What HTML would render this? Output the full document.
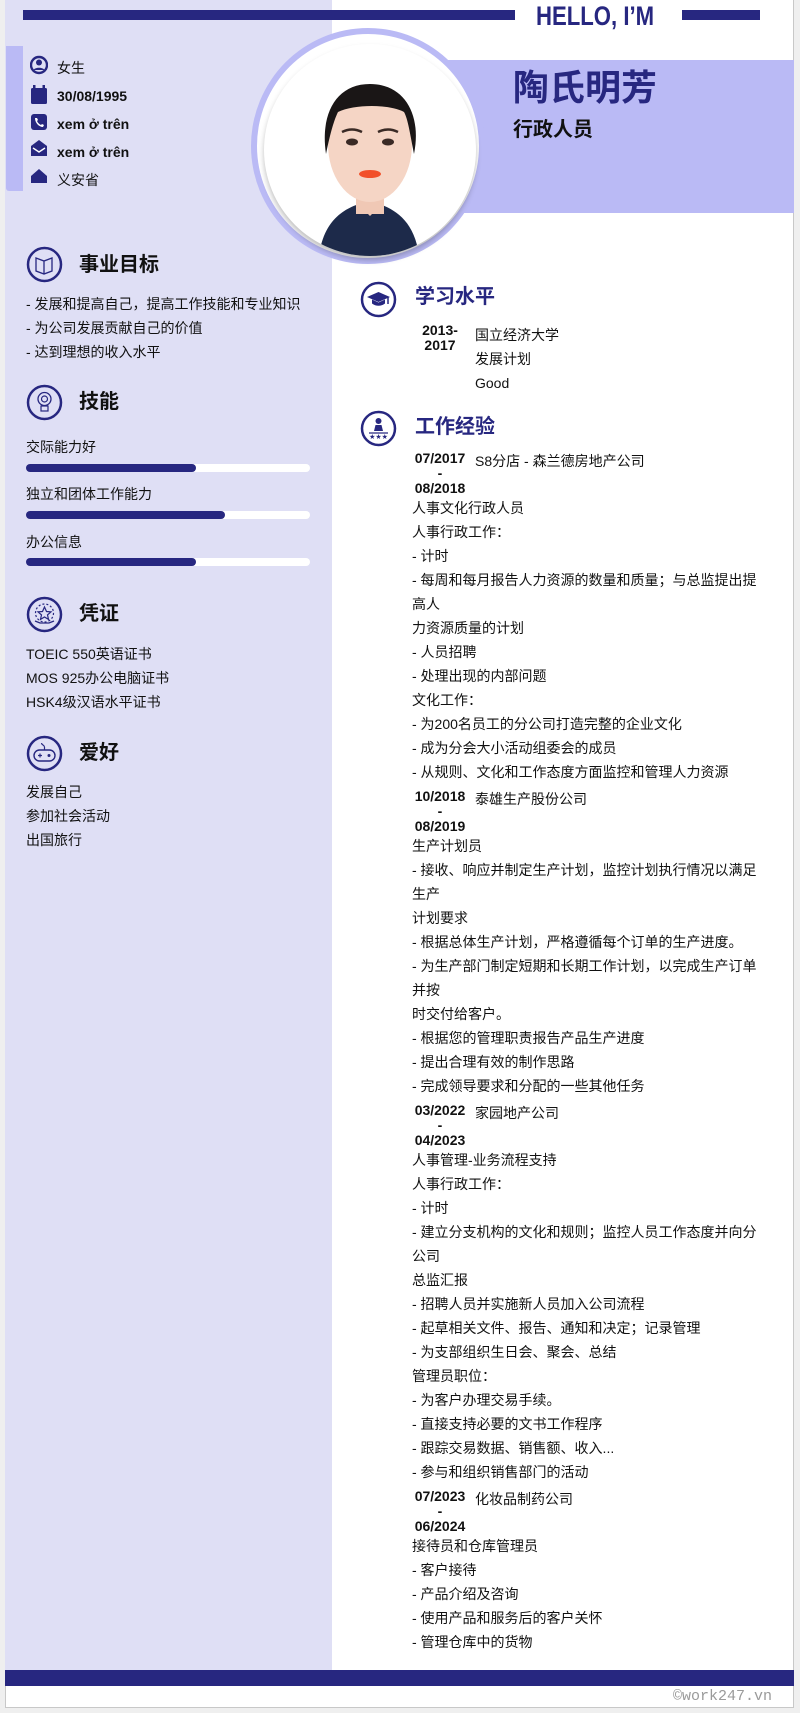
<!DOCTYPE html>
<html><head><meta charset="utf-8">
<style>
*{margin:0;padding:0;box-sizing:border-box}
html,body{width:800px;height:1713px;background:#efefef;overflow:hidden}
body{font-family:"Liberation Sans","Noto Sans CJK SC",sans-serif;color:#111;position:relative}
.page{position:absolute;left:5px;top:0;width:789px;height:1708px;background:#fff;border:1px solid #c8c8c8;border-top:none}
.abs{position:absolute}
.left{position:absolute;left:5px;top:0;width:327px;height:1670px;background:#dfdff5}
.navy{background:#272780}
.ci{position:absolute;left:57px;font-size:14px;line-height:20px;white-space:nowrap}
.h2{position:absolute;font-size:20px;font-weight:bold;line-height:26px;white-space:nowrap}
.txt{position:absolute;left:26px;font-size:14px;line-height:24px;white-space:nowrap}
.bar{position:absolute;left:26px;width:284px;height:8px;background:#fff;border-radius:4px}
.bar i{display:block;height:8px;background:#272780;border-radius:4px}
.job{position:absolute;left:412px;width:360px;font-size:14px;line-height:24px;white-space:nowrap}
.row{display:flex;height:50px}
.dt{width:56px;text-align:center;font-weight:bold;line-height:15px;padding-top:5px}
.co{padding-left:7px;padding-top:3px}
</style></head><body>
<div class="page"></div>
<div class="left"></div>
<div class="abs navy" style="left:23px;top:10px;width:492px;height:10px"></div>
<div class="abs navy" style="left:682px;top:10px;width:78px;height:10px"></div>
<div class="abs" style="left:536px;top:0px;font-size:27px;font-weight:bold;color:#272780;line-height:32px;transform:scaleX(0.82);transform-origin:left;white-space:nowrap">HELLO, I’M</div>

<div class="abs" style="left:6px;top:46px;width:17px;height:145px;background:#babaf5;border-radius:0 0 0 3px"></div>
<svg class="abs" style="left:30px;top:55px" width="18" height="140" viewBox="0 0 18 140">
<g fill="#272780">
<circle cx="9" cy="10" r="8" fill="none" stroke="#272780" stroke-width="2.4"/><circle cx="9" cy="7.5" r="3"/><path d="M3.5 15c1.5-3 9.5-3 11 0z"/>
<rect x="1" y="33" width="16" height="16" rx="1.5"/><rect x="3" y="30" width="2.5" height="5"/><rect x="12.5" y="30" width="2.5" height="5"/>
<rect x="1" y="59" width="16" height="16" rx="3"/>
<path d="M1 91l8-6 8 6v10H1z"/>
<path d="M1 121l8-7 8 7v7H1z"/>
</g>
<path d="M5 63c0 5 4 9 8 9l1-2-2-1-1 1c-2-1-3-2-4-4l1-1-1-2z" fill="#fff"/>
<path d="M3 93l6 4 6-4" fill="none" stroke="#fff" stroke-width="1.4"/>
</svg>
<div class="ci" style="top:58px">女生</div>
<div class="ci" style="top:86px;font-weight:bold">30/08/1995</div>
<div class="ci" style="top:114px;font-weight:bold">xem ở trên</div>
<div class="ci" style="top:142px;font-weight:bold">xem ở trên</div>
<div class="ci" style="top:170px">义安省</div>

<div class="abs" style="left:430px;top:60px;width:364px;height:153px;background:#babaf5"></div>
<div class="abs" style="left:513px;top:66px;font-size:36px;font-weight:bold;color:#272780;line-height:44px">陶氏明芳</div>
<div class="abs" style="left:513px;top:117px;font-size:20px;font-weight:bold;line-height:26px">行政人员</div>

<div class="abs" style="left:251px;top:28px;width:234px;height:236px;border-radius:50%;border:6px solid #babaf5;background:#fff"></div>
<div class="abs" style="left:264px;top:44px;width:212px;height:212px;border-radius:50%;overflow:hidden;background:#fff;box-shadow:0 4px 6px rgba(0,0,0,.25)">
<svg width="212" height="212" viewBox="0 0 212 212">
<path d="M55 212c5-40 30-50 50-55 20 5 45 15 50 55z" fill="#1d2a4a"/>
<rect x="92" y="140" width="28" height="30" fill="#f0c8b5"/>
<path d="M92 158l14 14 14-14" fill="#f0c8b5"/>
<ellipse cx="106" cy="100" rx="42" ry="58" fill="#f5d5c5"/>
<path d="M62 110c-6-40 10-70 44-70s52 30 44 70c-4-20-6-35-10-42-14-8-50-8-66 0-4 8-8 22-12 42z" fill="#1a1616"/>
<ellipse cx="88" cy="98" rx="6" ry="3.5" fill="#3a2a25"/><ellipse cx="124" cy="98" rx="6" ry="3.5" fill="#3a2a25"/>
<path d="M78 88q10-5 20 0M114 88q10-5 20 0" stroke="#3a2a25" stroke-width="2.5" fill="none"/>
<ellipse cx="106" cy="130" rx="11" ry="4" fill="#f2502a"/>
</svg></div>

<svg class="abs" style="left:26px;top:246px" width="37" height="37" viewBox="0 0 37 37"><circle cx="18.5" cy="18.5" r="16.5" fill="none" stroke="#272780" stroke-width="2.5"/><path d="M10 12l8 3 8-3v13l-8 3-8-3zM18 15v13" fill="none" stroke="#272780" stroke-width="1.3"/></svg>
<div class="h2" style="left:79px;top:252px">事业目标</div>
<div class="txt" style="top:292px">- 发展和提高自己，提高工作技能和专业知识</div>
<div class="txt" style="top:316px">- 为公司发展贡献自己的价值</div>
<div class="txt" style="top:340px">- 达到理想的收入水平</div>

<svg class="abs" style="left:26px;top:384px" width="37" height="37" viewBox="0 0 37 37"><circle cx="18.5" cy="18.5" r="16.5" fill="none" stroke="#272780" stroke-width="2.5"/><circle cx="18.5" cy="15" r="6.5" fill="none" stroke="#272780" stroke-width="1.3"/><circle cx="18.5" cy="15" r="3" fill="none" stroke="#272780" stroke-width="1.2"/><rect x="15" y="22" width="7" height="5" fill="none" stroke="#272780" stroke-width="1.2"/></svg>
<div class="h2" style="left:79px;top:389px">技能</div>
<div class="txt" style="top:435px">交际能力好</div>
<div class="bar" style="top:464px"><i style="width:170px"></i></div>
<div class="txt" style="top:482px">独立和团体工作能力</div>
<div class="bar" style="top:511px"><i style="width:199px"></i></div>
<div class="txt" style="top:530px">办公信息</div>
<div class="bar" style="top:558px"><i style="width:170px"></i></div>

<svg class="abs" style="left:26px;top:596px" width="37" height="37" viewBox="0 0 37 37"><circle cx="18.5" cy="18.5" r="16.5" fill="none" stroke="#272780" stroke-width="2.5"/><circle cx="18.5" cy="17" r="9" fill="none" stroke="#272780" stroke-width="1.2" stroke-dasharray="2 2"/><path d="M18.5 11l2 4.5 4.5.4-3.5 3 1 4.5-4-2.4-4 2.4 1-4.5-3.5-3 4.5-.4z" fill="none" stroke="#272780" stroke-width="1.2"/><path d="M9 25l5 2h9l5-2" fill="none" stroke="#272780" stroke-width="1.3"/></svg>
<div class="h2" style="left:79px;top:601px">凭证</div>
<div class="txt" style="top:642px">TOEIC 550英语证书</div>
<div class="txt" style="top:666px">MOS 925办公电脑证书</div>
<div class="txt" style="top:690px">HSK4级汉语水平证书</div>

<svg class="abs" style="left:26px;top:735px" width="37" height="37" viewBox="0 0 37 37"><circle cx="18.5" cy="18.5" r="16.5" fill="none" stroke="#272780" stroke-width="2.5"/><rect x="8" y="15" width="21" height="11" rx="5.5" fill="none" stroke="#272780" stroke-width="1.4"/><path d="M18.5 15v-3c0-2-3-2-3-4" fill="none" stroke="#272780" stroke-width="1.2"/><path d="M12 20.5h4M14 18.5v4" stroke="#272780" stroke-width="1.2"/><circle cx="23" cy="20.5" r="1.5" fill="#272780"/></svg>
<div class="h2" style="left:79px;top:740px">爱好</div>
<div class="txt" style="top:780px">发展自己</div>
<div class="txt" style="top:804px">参加社会活动</div>
<div class="txt" style="top:828px">出国旅行</div>

<svg class="abs" style="left:360px;top:281px" width="37" height="37" viewBox="0 0 37 37"><circle cx="18.5" cy="18.5" r="16.5" fill="none" stroke="#272780" stroke-width="2.5"/><path d="M7 16l11.5-5 11.5 5-11.5 5z" fill="#272780"/><path d="M12 18.5v4c4 3 9 3 13 0v-4l-6.5 3z" fill="#272780"/><path d="M28 16v7" stroke="#272780" stroke-width="1.5"/></svg>
<div class="h2" style="left:415px;top:284px;color:#272780">学习水平</div>
<div class="abs" style="left:412px;top:323px;width:56px;text-align:center;font-weight:bold;font-size:14px;line-height:15px">2013-<br>2017</div>
<div class="abs" style="left:475px;top:323px;font-size:14px;line-height:24px">国立经济大学<br>发展计划<br>Good</div>

<svg class="abs" style="left:360px;top:410px" width="37" height="37" viewBox="0 0 37 37"><circle cx="18.5" cy="18.5" r="16.5" fill="none" stroke="#272780" stroke-width="2.5"/><circle cx="18.5" cy="11" r="3" fill="#272780"/><path d="M14 21l1.5-6h6l1.5 6z" fill="#272780"/><path d="M9 23h19" stroke="#272780" stroke-width="1.2"/><text x="18.5" y="29" font-size="7" text-anchor="middle" fill="#272780" font-family="DejaVu Sans">★★★</text></svg>
<div class="h2" style="left:415px;top:414px;color:#272780">工作经验</div>

<div class="job" style="top:446px">
<div class="row"><div class="dt">07/2017<br>-<br>08/2018</div><div class="co">S8分店 - 森兰德房地产公司</div></div>
<div>人事文化行政人员<br>人事行政工作：<br>- 计时<br>- 每周和每月报告人力资源的数量和质量；与总监提出提<br>高人<br>力资源质量的计划<br>- 人员招聘<br>- 处理出现的内部问题<br>文化工作：<br>- 为200名员工的分公司打造完整的企业文化<br>- 成为分会大小活动组委会的成员<br>- 从规则、文化和工作态度方面监控和管理人力资源</div>
<div class="row"><div class="dt">10/2018<br>-<br>08/2019</div><div class="co">泰雄生产股份公司</div></div>
<div>生产计划员<br>- 接收、响应并制定生产计划，监控计划执行情况以满足<br>生产<br>计划要求<br>- 根据总体生产计划，严格遵循每个订单的生产进度。<br>- 为生产部门制定短期和长期工作计划，以完成生产订单<br>并按<br>时交付给客户。<br>- 根据您的管理职责报告产品生产进度<br>- 提出合理有效的制作思路<br>- 完成领导要求和分配的一些其他任务</div>
<div class="row"><div class="dt">03/2022<br>-<br>04/2023</div><div class="co">家园地产公司</div></div>
<div>人事管理-业务流程支持<br>人事行政工作：<br>- 计时<br>- 建立分支机构的文化和规则；监控人员工作态度并向分<br>公司<br>总监汇报<br>- 招聘人员并实施新人员加入公司流程<br>- 起草相关文件、报告、通知和决定；记录管理<br>- 为支部组织生日会、聚会、总结<br>管理员职位：<br>- 为客户办理交易手续。<br>- 直接支持必要的文书工作程序<br>- 跟踪交易数据、销售额、收入...<br>- 参与和组织销售部门的活动</div>
<div class="row"><div class="dt">07/2023<br>-<br>06/2024</div><div class="co">化妆品制药公司</div></div>
<div>接待员和仓库管理员<br>- 客户接待<br>- 产品介绍及咨询<br>- 使用产品和服务后的客户关怀<br>- 管理仓库中的货物</div>
</div>

<div class="abs navy" style="left:5px;top:1670px;width:789px;height:16px"></div>
<div class="abs" style="left:673px;top:1688px;font-family:'Liberation Mono',monospace;font-size:15px;color:#9a9a9a;line-height:18px">©work247.vn</div>
</body></html>
